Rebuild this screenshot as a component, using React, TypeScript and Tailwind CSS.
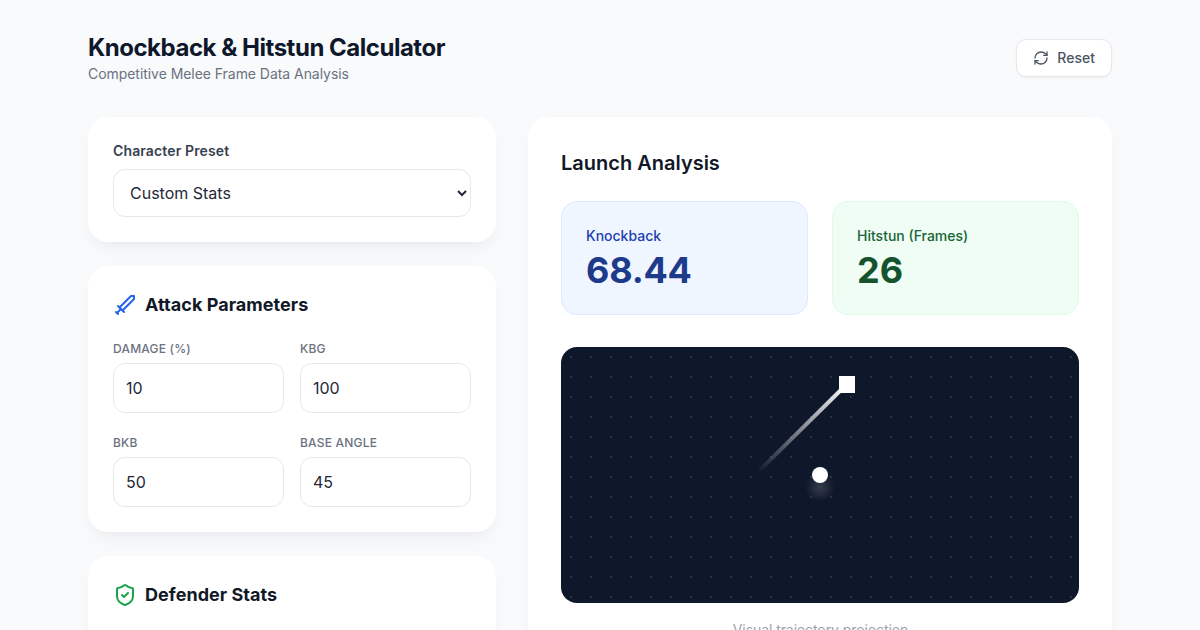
import { RefreshCw, ShieldCheck, Sword } from 'lucide-react';

const fields = [
  [
    { label: 'DAMAGE (%)', value: '10' },
    { label: 'KBG', value: '100' },
  ],
  [
    { label: 'BKB', value: '50' },
    { label: 'BASE ANGLE', value: '45' },
  ],
];

const cardShadow = 'rounded-[20px] bg-white shadow-[0_10px_25px_-5px_rgba(15,23,42,0.05),0_8px_10px_-6px_rgba(15,23,42,0.03)]';

export default function App() {
  return (
    <div className="h-[630px] overflow-hidden bg-[#f8fafc] px-[88px] pt-8 font-['Inter',sans-serif] text-[#0f172a]">
      <header className="flex h-[52px] items-center justify-between">
        <div className="pt-0.5">
          <h1 className="text-[24px] leading-[30px] font-bold tracking-[-0.48px]">Knockback &amp; Hitstun Calculator</h1>
          <p className="text-sm leading-[22px] tracking-[-0.05px] text-[#6b7280]">Competitive Melee Frame Data Analysis</p>
        </div>
        <button className="flex h-[38px] items-center gap-2 rounded-[10px] border border-[#e5e7eb] bg-white px-4 text-sm font-medium text-[#4b5563] shadow-[0_1px_2px_rgba(0,0,0,0.05)]">
          <RefreshCw size={16} />
          Reset
        </button>
      </header>

      <div className="mt-[33px] grid grid-cols-[408px_584px] gap-8">
        <div className="flex flex-col gap-6">
          <section className={`${cardShadow} p-[25px]`}>
            <label className="mb-[9px] block text-sm leading-[18px] font-semibold tracking-[0.13px] text-[#374151]">Character Preset</label>
            <select defaultValue="custom" className="h-12 w-full rounded-xl border border-[#e5e7eb] bg-white px-3 text-base text-[#1f2937]">
              <option value="custom">Custom Stats</option>
            </select>
          </section>

          <section className={`${cardShadow} p-[25px]`}>
            <h2 className="mb-[22px] flex h-7 items-center gap-2 text-lg font-bold tracking-[0.05px] text-[#111827]">
              <Sword size={24} className="text-[#2563eb]" />
              Attack Parameters
            </h2>
            <div className="flex flex-col gap-[22px]">
              {fields.map((row, i) => (
                <div key={i} className="grid grid-cols-2 gap-4">
                  {row.map((f) => (
                    <div key={f.label}>
                      <label className="mb-1.5 block text-xs leading-4 font-medium tracking-[0.2px] text-[#6b7280]">{f.label}</label>
                      <input readOnly value={f.value} className="h-[50px] w-full rounded-xl border border-[#e5e7eb] bg-white px-3 text-base text-[#1f2937]" />
                    </div>
                  ))}
                </div>
              ))}
            </div>
          </section>

          <section className={`${cardShadow} h-[200px] p-[25px]`}>
            <h2 className="flex h-7 items-center gap-2 text-lg font-bold tracking-[0.05px] text-[#111827]">
              <ShieldCheck size={24} className="text-[#16a34a]" />
              Defender Stats
            </h2>
          </section>
        </div>

        <section className={`${cardShadow} h-[600px] px-[33px] pt-8`}>
          <h2 className="text-xl leading-7 font-semibold text-[#111827]">Launch Analysis</h2>
          <div className="mt-6 grid grid-cols-2 gap-6">
            <div className="h-[114px] rounded-2xl border border-[#dbeafe] bg-[#eff6ff] p-6">
              <p className="mb-1 text-sm leading-5 font-medium text-[#1e40af]">Knockback</p>
              <p className="text-[36px] leading-[40px] font-bold tracking-[-0.2px] text-[#1e3a8a]">68.44</p>
            </div>
            <div className="h-[114px] rounded-2xl border border-[#dcfce7] bg-[#f0fdf4] p-6">
              <p className="mb-1 text-sm leading-5 font-medium text-[#166534]">Hitstun (Frames)</p>
              <p className="text-[36px] leading-[40px] font-bold text-[#14532d]">26</p>
            </div>
          </div>
          <div className="relative mt-8 h-64 overflow-hidden rounded-2xl bg-[#0f172a] bg-[radial-gradient(circle,#263245_1px,transparent_1px)] bg-[length:20px_20px]">
            <svg width="518" height="256" viewBox="0 0 518 256" className="absolute inset-0">
              <defs>
                <linearGradient id="trail" gradientUnits="userSpaceOnUse" x1="197" y1="125" x2="286" y2="37">
                  <stop offset="0" stopColor="#ffffff" stopOpacity="0" />
                  <stop offset="1" stopColor="#ffffff" />
                </linearGradient>
                <radialGradient id="glow">
                  <stop offset="0" stopColor="#ffffff" stopOpacity="0.16" />
                  <stop offset="1" stopColor="#ffffff" stopOpacity="0" />
                </radialGradient>
              </defs>
              <line x1="197" y1="125" x2="286" y2="37" stroke="url(#trail)" strokeWidth="4" />
              <circle cx="259" cy="140" r="15" fill="url(#glow)" />
            </svg>
            <div className="absolute top-[29px] left-[277.5px] h-[16.5px] w-[16.5px] bg-white" />
            <div className="absolute top-[120px] left-[251px] h-4 w-4 rounded-full bg-white" />
          </div>
          <p className="mt-[17px] pl-px text-center text-sm leading-5 tracking-[-0.07px] text-[#9ca3af]">Visual trajectory projection</p>
        </section>
      </div>
    </div>
  );
}
